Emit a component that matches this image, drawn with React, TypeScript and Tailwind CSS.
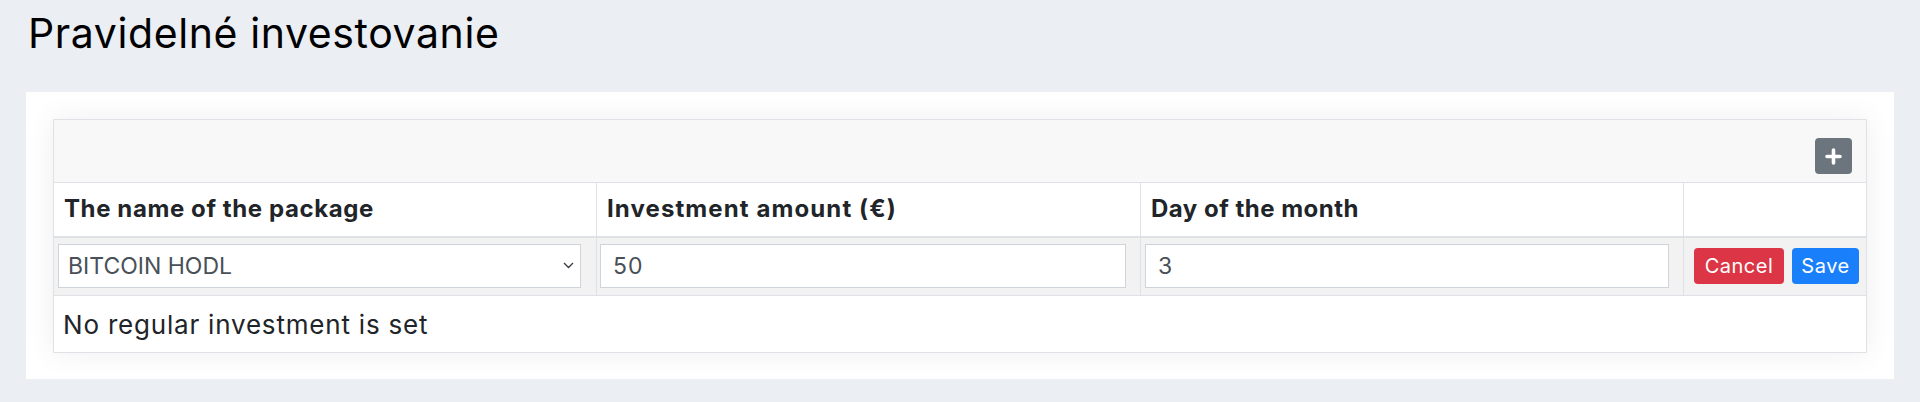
import { useState } from "react";

const baseFont = { fontFamily: "Inter, 'Noto Sans', sans-serif" };

function PlusIcon() {
  return (
    <svg width="17" height="17" viewBox="0 0 17 17" fill="none">
      <path
        d="M8.5 2v13M2 8.5h13"
        stroke="white"
        strokeWidth="3.6"
        strokeLinecap="round"
      />
    </svg>
  );
}

function Chevron() {
  return (
    <svg width="11" height="7" viewBox="0 0 11 7" fill="none">
      <path d="M1 1l4.5 4.5L10 1" stroke="#343a40" strokeWidth="1.3" />
    </svg>
  );
}

export default function App() {
  const [pkg, setPkg] = useState("BITCOIN HODL");
  const [amount, setAmount] = useState("50");
  const [day, setDay] = useState("3");

  return (
    <div
      className="min-h-screen bg-[#ebeef3] px-[26px] pt-[9px] text-[#212529]"
      style={baseFont}
    >
      <h1 className="pl-[2px] text-[41px] font-normal leading-[48px] tracking-[0.6px] text-black">
        Pravidelné investovanie
      </h1>

      <div className="mt-[35px] bg-white px-[27px] pb-[26px] pt-[27px]">
        <table className="w-full table-fixed border-collapse border border-[#dee2e6] shadow-[0_0_28px_rgba(0,0,0,0.07)]">
          <colgroup>
            <col className="w-[543px]" />
            <col className="w-[544px]" />
            <col className="w-[543px]" />
            <col />
          </colgroup>
          <tbody>
            <tr className="bg-[#f8f8f8]">
              <td colSpan={4} className="h-[63px] border border-[#dee2e6] p-0">
                <div className="flex justify-end pr-[14px] pt-[10px]">
                  <button className="flex h-[36px] w-[37px] items-center justify-center rounded-[4px] bg-[#6c757d]">
                    <PlusIcon />
                  </button>
                </div>
              </td>
            </tr>
            <tr className="bg-white">
              <th className="h-[54px] border border-b-2 border-[#dee2e6] px-[10px] text-left text-[24px] font-bold tracking-[0.6px]">
                The name of the package
              </th>
              <th className="border border-b-2 border-[#dee2e6] px-[10px] text-left text-[24px] font-bold tracking-[1.1px]">
                Investment amount (€)
              </th>
              <th className="border border-b-2 border-[#dee2e6] px-[10px] text-left text-[24px] font-bold tracking-[0.5px]">
                Day of the month
              </th>
              <th className="border border-b-2 border-[#dee2e6]" />
            </tr>
            <tr className="bg-[#f2f2f2]">
              <td className="h-[59px] border border-[#dee2e6] pl-[4px] pr-[15px]">
                <div className="relative">
                  <select
                    value={pkg}
                    onChange={(e) => setPkg(e.target.value)}
                    className="h-[44px] w-full appearance-none border border-[#ced4da] bg-white pl-[9px] text-[23px] text-[#495057] outline-none"
                  >
                    <option>BITCOIN HODL</option>
                  </select>
                  <span className="pointer-events-none absolute right-[7px] top-[18px]">
                    <Chevron />
                  </span>
                </div>
              </td>
              <td className="border border-[#dee2e6] pl-[3px] pr-[14px]">
                <input
                  value={amount}
                  onChange={(e) => setAmount(e.target.value)}
                  className="h-[44px] w-full border border-[#ced4da] bg-white px-[12px] text-[23px] tracking-[1px] text-[#495057] outline-none"
                />
              </td>
              <td className="border border-[#dee2e6] pl-[4px] pr-[14px]">
                <input
                  value={day}
                  onChange={(e) => setDay(e.target.value)}
                  className="h-[44px] w-full border border-[#ced4da] bg-white px-[12px] text-[23px] tracking-[1px] text-[#495057] outline-none"
                />
              </td>
              <td className="border border-[#dee2e6] pl-[10px]">
                <div className="flex gap-[8px]">
                  <button className="h-[36px] w-[90px] rounded-[4px] bg-[#dc3545] text-[20px] tracking-[0.5px] text-white">
                    Cancel
                  </button>
                  <button className="h-[36px] w-[67px] rounded-[4px] bg-[#1a7ffb] text-[20px] tracking-[0.5px] text-white">
                    Save
                  </button>
                </div>
              </td>
            </tr>
            <tr className="bg-white">
              <td
                colSpan={4}
                className="h-[57px] border border-[#dee2e6] px-[9px] text-[26px] tracking-[0.8px]"
              >
                No regular investment is set
              </td>
            </tr>
          </tbody>
        </table>
      </div>
    </div>
  );
}
